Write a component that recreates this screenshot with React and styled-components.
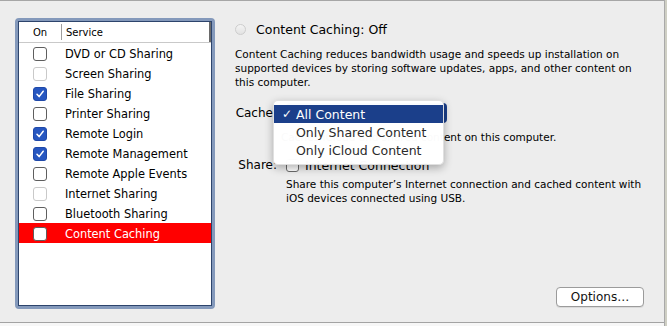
import React from 'react';
import styled, { createGlobalStyle } from 'styled-components';

const Global = createGlobalStyle`
  html, body { margin: 0; padding: 0; background: #ededed; }
  body { font-family: "DejaVu Sans", "Liberation Sans", sans-serif; color: #000; }
  * { box-sizing: border-box; }
`;

const Window = styled.div`
  width: 667px;
  height: 326px;
  display: flex;
  background: #ededed;
  overflow: hidden;
`;

const Main = styled.div`
  flex: 1;
  display: flex;
  flex-direction: column;
`;

const EdgeStrip = styled.div`
  width: 3px;
  border-left: 1px solid #a9a9a9;
  background: #cfcfc4;
`;

const Body = styled.div`
  height: 322px;
  display: flex;
  border-top: 1px solid #a6a6a6;
  padding: 17px 0 0 15px;
`;

const Footer = styled.div`
  flex: 1;
  border-top: 1px solid #a3a3a3;
  background: #f7f7f7;
`;

const ListFrame = styled.div`
  width: 200px;
  height: 291px;
  border: 3px solid #8499bb;
  border-radius: 4px;
`;

const ListInner = styled.div`
  height: 100%;
  border: 1px solid #2d446c;
  background: #fff;
  display: flex;
  flex-direction: column;
`;

const Header = styled.div`
  height: 21px;
  display: flex;
  align-items: center;
  border-bottom: 1px solid #c9c9c9;
  font-size: 10px;
`;

const HeaderCell = styled.div`
  width: ${p => p.$w ? `${p.$w}px` : 'auto'};
  flex: ${p => p.$w ? 'none' : 1};
  padding-left: ${p => p.$pl}px;
  align-self: stretch;
  display: flex;
  align-items: center;
  border-right: ${p => p.$end ? '2px solid #6a6a6a' : 'none'};
`;

const HeaderSep = styled.div`
  width: 1px;
  height: 16px;
  background: #9e9e9e;
`;

const Row = styled.div`
  height: 20px;
  display: flex;
  align-items: center;
  padding-top: 1px;
  font-size: 11.4px;
  background: ${p => p.$selected ? '#ff0000' : 'transparent'};
  color: ${p => p.$selected ? '#fff' : '#000'};
`;

const RowCheck = styled.div`
  width: 14px;
  height: 14px;
  margin-left: 14px;
  margin-right: 18px;
  border-radius: 3px;
  display: flex;
  align-items: center;
  justify-content: center;
  background: ${p => p.$checked ? '#2656c0' : '#fff'};
  border: 1px solid ${p => p.$checked ? '#1f48a8' : p.$disabled ? '#c9c9c9' : '#5e5e5e'};
`;

const RightPanel = styled.div`
  flex: 1;
  margin-left: 20px;
  padding: 0 20px 15px 0;
  display: flex;
  flex-direction: column;
`;

const TitleRow = styled.div`
  height: 18px;
  margin-top: 2px;
  display: flex;
  align-items: center;
  gap: 10px;
  font-size: 12.5px;
`;

const Radio = styled.div`
  width: 11px;
  height: 11px;
  border-radius: 50%;
  border: 1px solid #cdcdcd;
  background: linear-gradient(#f4f4f4, #e2e2e2);
`;

const SmallText = styled.div`
  font-size: 10.5px;
  line-height: 14px;
  margin-top: ${p => p.$mt}px;
  padding-left: ${p => p.$pl || 0}px;
  white-space: nowrap;
`;

const FieldRow = styled.div`
  height: 20px;
  margin-top: ${p => p.$mt}px;
  display: grid;
  grid-template-columns: 42px 1fr;
  column-gap: 9px;
  align-items: center;
`;

const FieldLabel = styled.div`
  text-align: right;
  font-size: 12px;
`;

const Popup = styled.div`
  position: relative;
  width: 161px;
  height: 20px;
  border-radius: 4px;
  background: #1b3f8a;
`;

const Menu = styled.div`
  position: absolute;
  left: -13px;
  top: -3px;
  width: 171px;
  padding: 4px 0 5px;
  background: rgba(255, 255, 255, 0.98);
  border-radius: 5px;
  border: 1px solid rgba(0, 0, 0, 0.12);
  box-shadow: 0 3px 9px rgba(0, 0, 0, 0.3);
  z-index: 2;
`;

const MenuItem = styled.div`
  height: 18px;
  display: flex;
  align-items: center;
  font-size: 12.5px;
  padding-left: 8px;
  background: ${p => p.$active ? '#1b3f8a' : 'transparent'};
  color: ${p => p.$active ? '#fff' : '#2a2a2a'};
`;

const MenuCheck = styled.span`
  width: 14px;
  font-size: 12px;
  font-weight: bold;
`;

const CheckLine = styled.div`
  display: flex;
  align-items: center;
  gap: 6px;
  font-size: 12.5px;
`;

const Box = styled.div`
  width: 13px;
  height: 13px;
  border: 1px solid #6b6b6b;
  border-radius: 3px;
  background: #fff;
`;

const Spacer = styled.div`
  flex: 1;
`;

const ButtonRow = styled.div`
  display: flex;
  justify-content: flex-end;
`;

const Button = styled.button`
  width: 88px;
  height: 20px;
  padding: 0;
  border: 1px solid #9b9b9b;
  border-radius: 4px;
  background: #fff;
  font-family: "DejaVu Sans", sans-serif;
  font-size: 12px;
  color: #111;
  box-shadow: 0 1px 0 rgba(0, 0, 0, 0.08);
`;

const Tick = () => (
  <svg width="10" height="10" viewBox="0 0 10 10">
    <path d="M2 5.2 L4.1 7.6 L8.2 2.2" fill="none" stroke="#fff" strokeWidth="1.5" strokeLinecap="round" strokeLinejoin="round" />
  </svg>
);

const services = [
  { name: 'DVD or CD Sharing' },
  { name: 'Screen Sharing', disabled: true },
  { name: 'File Sharing', checked: true },
  { name: 'Printer Sharing' },
  { name: 'Remote Login', checked: true },
  { name: 'Remote Management', checked: true },
  { name: 'Remote Apple Events' },
  { name: 'Internet Sharing', disabled: true },
  { name: 'Bluetooth Sharing' },
  { name: 'Content Caching', selected: true },
];

export default function App() {
  return (
    <>
      <Global />
      <Window>
        <Main>
          <Body>
            <ListFrame>
              <ListInner>
                <Header>
                  <HeaderCell $w={42} $pl={14}>On</HeaderCell>
                  <HeaderSep />
                  <HeaderCell $pl={4} $end>Service</HeaderCell>
                </Header>
                {services.map(s => (
                  <Row key={s.name} $selected={s.selected}>
                    <RowCheck $checked={s.checked} $disabled={s.disabled}>
                      {s.checked && <Tick />}
                    </RowCheck>
                    {s.name}
                  </Row>
                ))}
              </ListInner>
            </ListFrame>
            <RightPanel>
              <TitleRow>
                <Radio />
                Content Caching: Off
              </TitleRow>
              <SmallText $mt={9}>
                Content Caching reduces bandwidth usage and speeds up installation on<br />
                supported devices by storing software updates, apps, and other content on<br />
                this computer.
              </SmallText>
              <FieldRow $mt={14}>
                <FieldLabel>Cache:</FieldLabel>
                <Popup>
                  <Menu>
                    <MenuItem $active><MenuCheck>✓</MenuCheck>All Content</MenuItem>
                    <MenuItem><MenuCheck />Only Shared Content</MenuItem>
                    <MenuItem><MenuCheck />Only iCloud Content</MenuItem>
                  </Menu>
                </Popup>
              </FieldRow>
              <SmallText $mt={7} $pl={46}>
                Caches iCloud and shared content on this computer.
              </SmallText>
              <FieldRow $mt={11}>
                <FieldLabel>Share:</FieldLabel>
                <CheckLine>
                  <Box />
                  Internet Connection
                </CheckLine>
              </FieldRow>
              <SmallText $mt={2} $pl={51}>
                Share this computer’s Internet connection and cached content with<br />
                iOS devices connected using USB.
              </SmallText>
              <Spacer />
              <ButtonRow>
                <Button>Options…</Button>
              </ButtonRow>
            </RightPanel>
          </Body>
          <Footer />
        </Main>
        <EdgeStrip />
      </Window>
    </>
  );
}
